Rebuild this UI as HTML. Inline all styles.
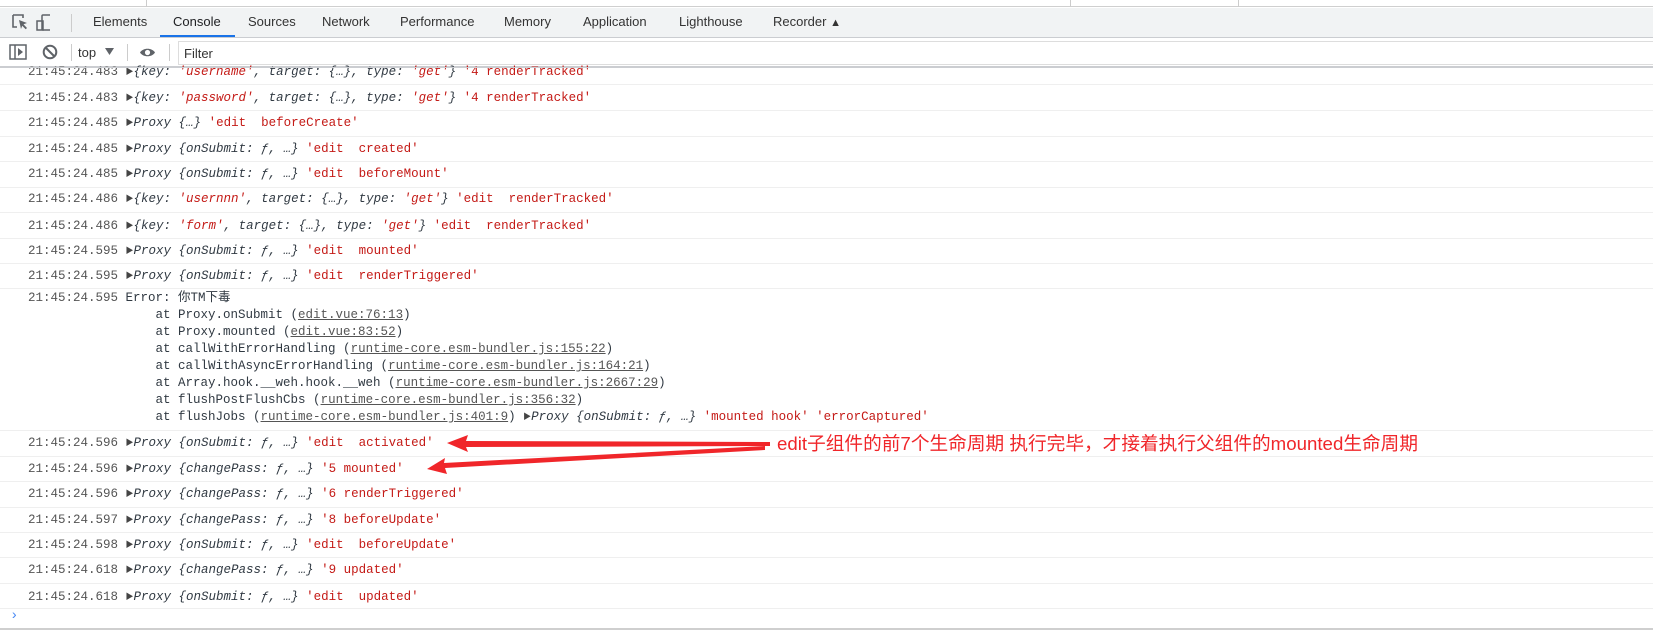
<!DOCTYPE html>
<html><head><meta charset="utf-8"><style>
*{margin:0;padding:0;box-sizing:border-box}
body{width:1653px;height:630px;overflow:hidden;background:#fff;position:relative;font-family:"Liberation Sans",sans-serif}
.abs{position:absolute}
.tab{position:absolute;top:14px;font-size:13px;color:#333;line-height:16px}
.r{position:absolute;left:28px;height:18px;line-height:18px;font-family:"Liberation Mono","Noto Sans CJK SC",monospace;font-size:12.5px;white-space:pre;color:#303942}
.ts{color:#555}
.tri{font-size:8px;color:#444;vertical-align:1px}
i{font-style:italic;color:#303942}
.s{color:#c41a16}
.u{text-decoration:underline;color:#555}
.sep{position:absolute;left:0;width:1653px;height:1px;background:#efefef}
</style></head><body>
<div class="abs" style="left:0;top:0;width:1653px;height:7px;background:#fff;border-bottom:1px solid #cfcfcf"></div>
<div class="abs" style="left:146px;top:0;width:1px;height:7px;background:#ccc"></div>
<div class="abs" style="left:1070px;top:0;width:1px;height:7px;background:#ccc"></div>
<div class="abs" style="left:1238px;top:0;width:1px;height:7px;background:#ccc"></div>
<div class="abs" style="left:0;top:8px;width:1653px;height:30px;background:#f1f3f4;border-bottom:1px solid #cbcdd1"></div>
<svg class="abs" style="left:10px;top:12px" width="40" height="22" viewBox="0 0 40 22">
<path d="M3 3h10v3M3 3v12h4" fill="none" stroke="#5f6368" stroke-width="1.6"/>
<path d="M9 8l8 3-3.5 1.2L17 16l-1.3 1.3-3.5-3.6L11 17z" fill="#5f6368"/>
<rect x="32" y="3" width="9" height="15" rx="1" fill="none" stroke="#5f6368" stroke-width="1.5"/>
<rect x="27" y="9" width="6" height="9" fill="none" stroke="#5f6368" stroke-width="1.5"/>
</svg>
<div class="abs" style="left:71px;top:14px;width:1px;height:18px;background:#ccc"></div>
<div class="tab" style="left:93px">Elements</div>
<div class="tab" style="left:173px;color:#202124">Console</div>
<div class="abs" style="left:160px;top:35px;width:75px;height:2px;background:#1a73e8"></div>
<div class="tab" style="left:248px">Sources</div>
<div class="tab" style="left:322px">Network</div>
<div class="tab" style="left:400px">Performance</div>
<div class="tab" style="left:504px">Memory</div>
<div class="tab" style="left:583px">Application</div>
<div class="tab" style="left:679px">Lighthouse</div>
<div class="tab" style="left:773px">Recorder <span style="font-size:11px">&#9650;</span></div>
<div class="abs" style="left:0;top:39px;width:1653px;height:28px;background:#fff;border-bottom:1px solid #cbcdd1"></div>
<svg class="abs" style="left:8px;top:43px" width="170" height="20" viewBox="0 0 170 20">
<rect x="2" y="2" width="16" height="14" fill="none" stroke="#5f6368" stroke-width="1.5"/>
<line x1="7" y1="2" x2="7" y2="16" stroke="#5f6368" stroke-width="1.5"/>
<path d="M10 5l5 4-5 4z" fill="#5f6368"/>
<circle cx="42" cy="9" r="6.3" fill="none" stroke="#5f6368" stroke-width="2"/>
<line x1="37.5" y1="4.5" x2="46.5" y2="13.5" stroke="#5f6368" stroke-width="2"/>
<line x1="63.5" y1="1" x2="63.5" y2="18" stroke="#ccc"/>
<text x="70" y="14" font-family="Liberation Sans" font-size="13" fill="#333">top</text>
<path d="M97 5h9l-4.5 7z" fill="#5f6368"/>
<line x1="119.5" y1="1" x2="119.5" y2="18" stroke="#ccc"/>
<path d="M132 9.5c3-5 12-5 15 0c-3 5-12 5-15 0z" fill="#5f6368"/>
<circle cx="139.5" cy="9.5" r="2.6" fill="#fff"/>
<line x1="161.5" y1="1" x2="161.5" y2="18" stroke="#ccc"/>
</svg>
<div class="abs" style="left:178px;top:41px;width:1475px;height:24px;border:1px solid #ddd;border-right:none;font-size:13px;color:#333;padding:4px 0 0 5px">Filter</div>

<div class="r" style="top:63px"><span class="ts">21:45:24.483</span> <span class="tri">&#9654;</span><i>{key: <span class="s">'username'</span>, target: {…}, type: <span class="s">'get'</span>}</i> <span class="s">'4 renderTracked'</span></div>
<div class="abs" style="left:0;top:67px;width:1653px;height:1px;background:#cbcdd1"></div>
<div class="sep" style="top:84px"></div>
<div class="r" style="top:89px"><span class="ts">21:45:24.483</span> <span class="tri">&#9654;</span><i>{key: <span class="s">'password'</span>, target: {…}, type: <span class="s">'get'</span>}</i> <span class="s">'4 renderTracked'</span></div>
<div class="sep" style="top:110px"></div>
<div class="r" style="top:114px"><span class="ts">21:45:24.485</span> <span class="tri">&#9654;</span><i>Proxy {…}</i> <span class="s">'edit  beforeCreate'</span></div>
<div class="sep" style="top:136px"></div>
<div class="r" style="top:140px"><span class="ts">21:45:24.485</span> <span class="tri">&#9654;</span><i>Proxy {onSubmit: ƒ, …}</i> <span class="s">'edit  created'</span></div>
<div class="sep" style="top:161px"></div>
<div class="r" style="top:165px"><span class="ts">21:45:24.485</span> <span class="tri">&#9654;</span><i>Proxy {onSubmit: ƒ, …}</i> <span class="s">'edit  beforeMount'</span></div>
<div class="sep" style="top:187px"></div>
<div class="r" style="top:190px"><span class="ts">21:45:24.486</span> <span class="tri">&#9654;</span><i>{key: <span class="s">'usernnn'</span>, target: {…}, type: <span class="s">'get'</span>}</i> <span class="s">'edit  renderTracked'</span></div>
<div class="sep" style="top:212px"></div>
<div class="r" style="top:217px"><span class="ts">21:45:24.486</span> <span class="tri">&#9654;</span><i>{key: <span class="s">'form'</span>, target: {…}, type: <span class="s">'get'</span>}</i> <span class="s">'edit  renderTracked'</span></div>
<div class="sep" style="top:238px"></div>
<div class="r" style="top:242px"><span class="ts">21:45:24.595</span> <span class="tri">&#9654;</span><i>Proxy {onSubmit: ƒ, …}</i> <span class="s">'edit  mounted'</span></div>
<div class="sep" style="top:263px"></div>
<div class="r" style="top:267px"><span class="ts">21:45:24.595</span> <span class="tri">&#9654;</span><i>Proxy {onSubmit: ƒ, …}</i> <span class="s">'edit  renderTriggered'</span></div>
<div class="sep" style="top:288px"></div>
<div class="r" style="top:290px;line-height:17px;height:auto"><span class="ts">21:45:24.595</span> Error: 你TM下毒
                 at Proxy.onSubmit (<span class="u">edit.vue:76:13</span>)
                 at Proxy.mounted (<span class="u">edit.vue:83:52</span>)
                 at callWithErrorHandling (<span class="u">runtime-core.esm-bundler.js:155:22</span>)
                 at callWithAsyncErrorHandling (<span class="u">runtime-core.esm-bundler.js:164:21</span>)
                 at Array.hook.__weh.hook.__weh (<span class="u">runtime-core.esm-bundler.js:2667:29</span>)
                 at flushPostFlushCbs (<span class="u">runtime-core.esm-bundler.js:356:32</span>)
                 at flushJobs (<span class="u">runtime-core.esm-bundler.js:401:9</span>) <span class="tri">&#9654;</span><i>Proxy {onSubmit: ƒ, …}</i> <span class="s">'mounted hook' 'errorCaptured'</span></div>
<div class="sep" style="top:430px"></div>
<div class="r" style="top:434px"><span class="ts">21:45:24.596</span> <span class="tri">&#9654;</span><i>Proxy {onSubmit: ƒ, …}</i> <span class="s">'edit  activated'</span></div>
<div class="sep" style="top:456px"></div>
<div class="r" style="top:460px"><span class="ts">21:45:24.596</span> <span class="tri">&#9654;</span><i>Proxy {changePass: ƒ, …}</i> <span class="s">'5 mounted'</span></div>
<div class="sep" style="top:481px"></div>
<div class="r" style="top:485px"><span class="ts">21:45:24.596</span> <span class="tri">&#9654;</span><i>Proxy {changePass: ƒ, …}</i> <span class="s">'6 renderTriggered'</span></div>
<div class="sep" style="top:507px"></div>
<div class="r" style="top:511px"><span class="ts">21:45:24.597</span> <span class="tri">&#9654;</span><i>Proxy {changePass: ƒ, …}</i> <span class="s">'8 beforeUpdate'</span></div>
<div class="sep" style="top:532px"></div>
<div class="r" style="top:536px"><span class="ts">21:45:24.598</span> <span class="tri">&#9654;</span><i>Proxy {onSubmit: ƒ, …}</i> <span class="s">'edit  beforeUpdate'</span></div>
<div class="sep" style="top:557px"></div>
<div class="r" style="top:561px"><span class="ts">21:45:24.618</span> <span class="tri">&#9654;</span><i>Proxy {changePass: ƒ, …}</i> <span class="s">'9 updated'</span></div>
<div class="sep" style="top:583px"></div>
<div class="r" style="top:588px"><span class="ts">21:45:24.618</span> <span class="tri">&#9654;</span><i>Proxy {onSubmit: ƒ, …}</i> <span class="s">'edit  updated'</span></div>
<div class="sep" style="top:608px"></div>
<div class="abs" style="left:10px;top:608px;color:#4a8af4;font-size:14px;font-family:'Liberation Mono',monospace">›</div>
<div class="abs" style="left:0;top:628px;width:1653px;height:2px;background:#cfcfcf"></div>

<svg class="abs" style="left:0;top:0" width="1653" height="630">
<polygon points="447,443 468,435 466,441 770,442 770,446 466,447 468,452" fill="#f0262a"/>
<polygon points="427,469 445,458 444,463 765,446 765,450 445,468 447,474" fill="#f0262a"/>
<text x="777" y="450" font-family="Liberation Sans, Noto Sans CJK SC, sans-serif" font-size="18.5" fill="#f0262a" textLength="641" lengthAdjust="spacingAndGlyphs">edit子组件的前7个生命周期 执行完毕，才接着执行父组件的mounted生命周期</text>
</svg>
</body></html>
